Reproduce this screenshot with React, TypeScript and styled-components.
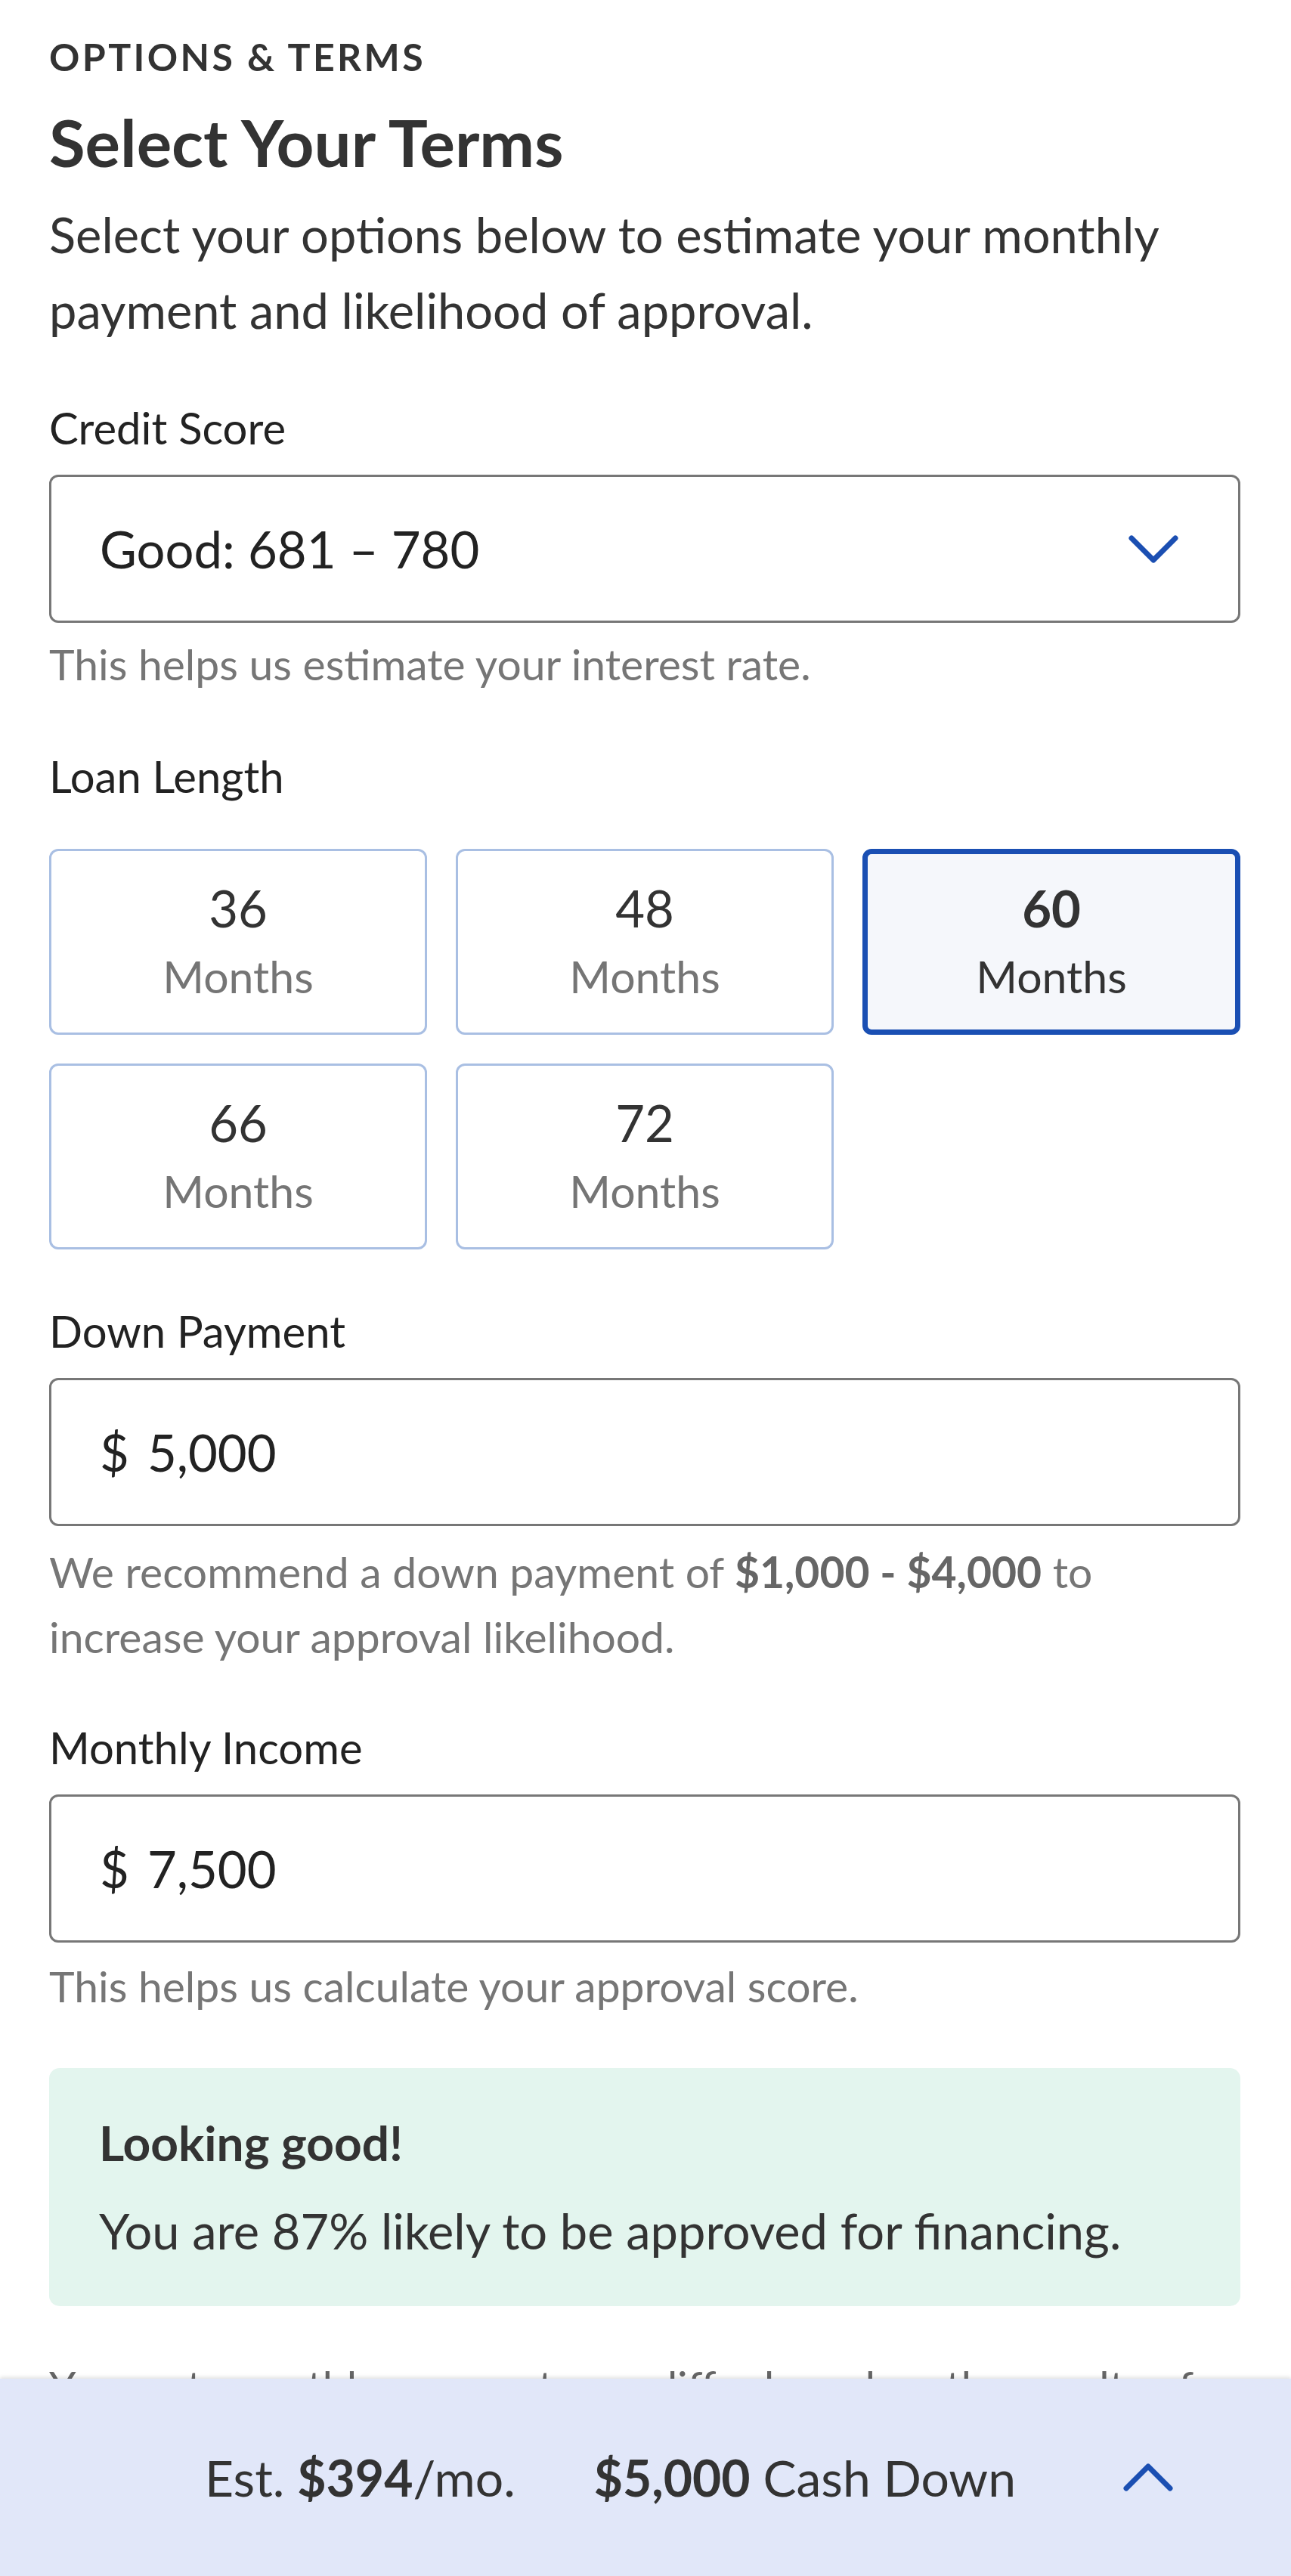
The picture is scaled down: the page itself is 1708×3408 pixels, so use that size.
import styled, { createGlobalStyle } from 'styled-components';

const GlobalStyle = createGlobalStyle`
  html, body {
    margin: 0;
    padding: 0;
    background: #ffffff;
  }
  body {
    font-family: Lato, "Open Sans", Arial, sans-serif;
    color: #333333;
  }
  * {
    box-sizing: border-box;
  }
`;

const loanTerms = [36, 48, 60, 66, 72];

const ChevronDown = () => (
  <svg width="66" height="37" viewBox="0 0 66 37" fill="none">
    <polyline points="4,4 33,33 62,4" stroke="#1b4fb2" strokeWidth="7" strokeLinecap="round" strokeLinejoin="round" />
  </svg>
);

const ChevronUp = () => (
  <svg width="66" height="37" viewBox="0 0 66 37" fill="none">
    <polyline points="4,33 33,4 62,33" stroke="#1b4fb2" strokeWidth="7" strokeLinecap="round" strokeLinejoin="round" />
  </svg>
);

const App = () => {
  const selectedTerm = 60;

  return (
    <>
      <GlobalStyle />
      <Page>
        <Eyebrow>OPTIONS &amp; TERMS</Eyebrow>
        <Title>Select Your Terms</Title>
        <Intro>Select your options below to estimate your monthly payment and likelihood of approval.</Intro>

        <Label $top={66}>Credit Score</Label>
        <Field>
          <FieldValue>Good: 681 – 780</FieldValue>
          <ChevronDown />
        </Field>
        <Helper $top={11}>This helps us estimate your interest rate.</Helper>

        <Label $top={66}>Loan Length</Label>
        <TermGrid>
          {loanTerms.map((term) => (
            <TermTile key={term} $selected={term === selectedTerm}>
              <TermNumber $selected={term === selectedTerm}>{term}</TermNumber>
              <TermUnit $selected={term === selectedTerm}>Months</TermUnit>
            </TermTile>
          ))}
        </TermGrid>

        <Label $top={68}>Down Payment</Label>
        <Field>
          <FieldValue>
            <Currency>$</Currency>5,000
          </FieldValue>
        </Field>
        <Helper $top={17}>
          We recommend a down payment of <strong>$1,000 - $4,000</strong> to increase your approval likelihood.
        </Helper>

        <Label $top={64}>Monthly Income</Label>
        <Field>
          <FieldValue>
            <Currency>$</Currency>7,500
          </FieldValue>
        </Field>
        <Helper $top={14}>This helps us calculate your approval score.</Helper>

        <Approval>
          <ApprovalTitle>Looking good!</ApprovalTitle>
          <ApprovalText>You are 87% likely to be approved for financing.</ApprovalText>
        </Approval>

        <Disclaimer>Your est. monthly payment may differ based on the results of your credit application.</Disclaimer>
      </Page>

      <SummaryBar>
        <Summary>
          <SummaryItem>
            Est. <b>$394</b>/mo.
          </SummaryItem>
          <SummaryItem>
            <b>$5,000</b> Cash Down
          </SummaryItem>
        </Summary>
        <ChevronUp />
      </SummaryBar>
    </>
  );
};

export default App;

const Page = styled.main`
  display: flex;
  flex-direction: column;
  padding: 45px 67px 60px 65px;
`;

const Eyebrow = styled.div`
  font-size: 50px;
  line-height: 60px;
  font-weight: 700;
  letter-spacing: 3.4px;
  color: #333333;
`;

const Title = styled.h1`
  margin: 33px 0 0;
  font-size: 87px;
  line-height: 100px;
  font-weight: 700;
  color: #333333;
`;

const Intro = styled.p`
  margin: 22px 0 0;
  font-size: 65px;
  line-height: 100px;
  color: #333333;
`;

const Label = styled.div<{ $top: number }>`
  margin-top: ${(p) => p.$top}px;
  margin-bottom: 22px;
  font-size: 58px;
  line-height: 80px;
  color: #222222;
`;

const Field = styled.div`
  height: 196px;
  display: flex;
  align-items: center;
  justify-content: space-between;
  padding: 0 79px 0 64px;
  border: 3px solid #777777;
  border-radius: 12px;
`;

const FieldValue = styled.div`
  font-size: 67px;
  line-height: 80px;
  color: #222222;
`;

const Currency = styled.span`
  margin-right: 24px;
`;

const Helper = styled.p<{ $top: number }>`
  margin: ${(p) => p.$top}px 0 0;
  font-size: 57px;
  line-height: 86px;
  color: #767676;

  strong {
    font-weight: 700;
    color: #666666;
  }
`;

const TermGrid = styled.div`
  display: grid;
  grid-template-columns: repeat(3, 1fr);
  gap: 38px;
  margin-top: 34px;
`;

const TermTile = styled.div<{ $selected: boolean }>`
  height: 246px;
  display: flex;
  flex-direction: column;
  align-items: center;
  justify-content: center;
  gap: 11px;
  border: ${(p) => (p.$selected ? '7px solid #1a4fb3' : '3px solid #a9bfe3')};
  border-radius: 12px;
  background: ${(p) => (p.$selected ? '#f5f7fb' : '#ffffff')};
`;

const TermNumber = styled.div<{ $selected: boolean }>`
  font-size: 67px;
  line-height: 80px;
  font-weight: ${(p) => (p.$selected ? 700 : 400)};
  color: #333333;
`;

const TermUnit = styled.div<{ $selected: boolean }>`
  font-size: 59px;
  line-height: 80px;
  color: ${(p) => (p.$selected ? '#333333' : '#757575')};
`;

const Approval = styled.section`
  margin-top: 66px;
  padding: 59px 66px 50px;
  border-radius: 14px;
  background: #e3f5ee;
`;

const ApprovalTitle = styled.div`
  font-size: 64px;
  line-height: 80px;
  font-weight: 700;
  color: #333333;
`;

const ApprovalText = styled.div`
  margin-top: 26px;
  font-size: 65px;
  line-height: 100px;
  color: #333333;
`;

const Disclaimer = styled.p`
  margin: 62px 0 0;
  font-size: 57px;
  line-height: 86px;
  color: #666666;
`;

const SummaryBar = styled.footer`
  position: fixed;
  left: 0;
  right: 0;
  bottom: 0;
  height: 261px;
  display: flex;
  align-items: center;
  padding: 0 156px 0 271px;
  background: #e1e7f9;
  box-shadow: 0 -2px 5px rgba(0, 0, 0, 0.12);
`;

const Summary = styled.div`
  display: flex;
  align-items: center;
  gap: 104px;
  margin-right: auto;
`;

const SummaryItem = styled.div`
  font-size: 66px;
  line-height: 80px;
  color: #333333;

  b {
    font-weight: 700;
  }
`;
